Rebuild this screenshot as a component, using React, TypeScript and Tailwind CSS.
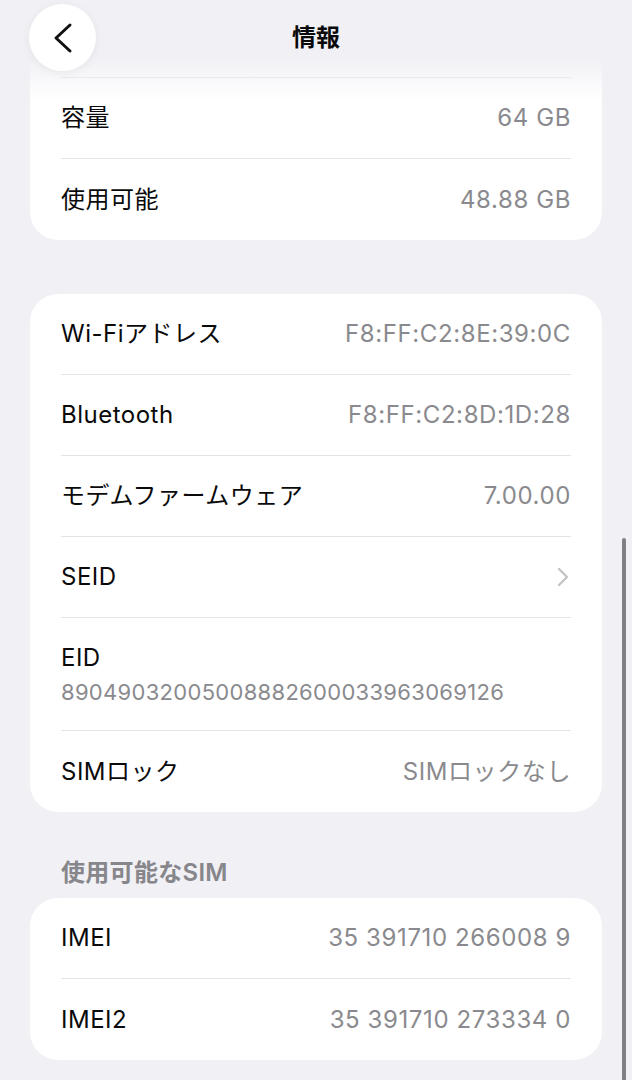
/**
 * AboutScreen
 *
 * iOS settings "情報" page, scrolled down a little:
 * - Floating header with back button, fading over the first card
 * - Storage card, network card, SIM section
 */

const FONT = {
    fontFamily: '"Inter", "Noto Sans CJK JP", sans-serif',
};

interface RowProps {
    label: string;
    value?: string;
    chevron?: boolean;
    last?: boolean;
}

function Row({ label, value, chevron, last }: RowProps) {
    return (
        <div className="px-[31px]">
            <div
                className={
                    "flex h-[81px] items-center justify-between" +
                    (last ? "" : " border-b border-[#e3e3e8]")
                }
            >
                <span className="text-[24px] leading-[30px] text-[#0a0a0a] tracking-[0.5px]">
                    {label}
                </span>
                {value && (
                    <span className="text-[24px] leading-[30px] text-[#8a8a8e] tracking-[0.6px]">
                        {value}
                    </span>
                )}
                {chevron && (
                    <svg
                        width="14"
                        height="22"
                        viewBox="0 0 14 22"
                        className="mr-[1px]"
                    >
                        <path
                            d="M3 3 L11 11 L3 19"
                            fill="none"
                            stroke="#c4c4c8"
                            strokeWidth="2.4"
                            strokeLinecap="round"
                            strokeLinejoin="round"
                        />
                    </svg>
                )}
            </div>
        </div>
    );
}

function Card({ children }: { children: React.ReactNode }) {
    return (
        <div className="mx-[30px] rounded-[28px] bg-white overflow-hidden">
            {children}
        </div>
    );
}

export default function App() {
    return (
        <div
            className="relative h-[1080px] w-[632px] overflow-hidden bg-[#f0f0f5]"
            style={FONT}
        >
            {/* Scrolled content */}
            <div className="flex flex-col -mt-[3px]">
                <Card>
                    <Row label="モデル番号" value="MQ6L3J/A" />
                    <Row label="容量" value="64 GB" />
                    <Row label="使用可能" value="48.88 GB" last />
                </Card>

                <div className="h-[54px]" />

                <Card>
                    <Row label="Wi-Fiアドレス" value="F8:FF:C2:8E:39:0C" />
                    <Row label="Bluetooth" value="F8:FF:C2:8D:1D:28" />
                    <Row label="モデムファームウェア" value="7.00.00" />
                    <Row label="SEID" chevron />
                    <div className="px-[31px]">
                        <div className="flex h-[113px] flex-col justify-center border-b border-[#e3e3e8]">
                            <span className="text-[24px] leading-[30px] text-[#0a0a0a] tracking-[0.5px]">
                                EID
                            </span>
                            <span className="mt-[5px] text-[22px] leading-[28px] text-[#8a8a8e] tracking-[0.3px]">
                                89049032005008882600033963069126
                            </span>
                        </div>
                    </div>
                    <Row label="SIMロック" value="SIMロックなし" last />
                </Card>

                <div className="px-[61px] pt-[46px] pb-[10px]">
                    <span className="block text-[24px] leading-[30px] font-semibold text-[#86868b] tracking-[0.3px]">
                        使用可能なSIM
                    </span>
                </div>

                <Card>
                    <Row label="IMEI" value="35 391710 266008 9" />
                    <Row label="IMEI2" value="35 391710 273334 0" last />
                </Card>
            </div>

            {/* Header fade over content */}
            <div className="pointer-events-none absolute inset-x-0 top-0 h-[100px] bg-gradient-to-b from-[#f0f0f5] from-55% to-[#f0f0f5]/0" />

            {/* Header */}
            <div className="absolute inset-x-0 top-0 flex h-[75px] items-center justify-center">
                <span className="text-[24px] font-semibold text-[#0a0a0a]">
                    情報
                </span>
                <button className="absolute left-[29px] top-[4px] flex h-[67px] w-[67px] items-center justify-center rounded-full bg-white/95 shadow-[0_2px_10px_rgba(0,0,0,0.06)]">
                    <svg width="30" height="34" viewBox="0 0 30 34">
                        <path
                            d="M22 4 L8 17 L22 30"
                            fill="none"
                            stroke="#111"
                            strokeWidth="3"
                            strokeLinecap="round"
                            strokeLinejoin="round"
                        />
                    </svg>
                </button>
            </div>

            {/* Scroll indicator */}
            <div className="absolute right-[6px] top-[538px] h-[560px] w-[4px] rounded-full bg-[#7f7f84]" />
        </div>
    );
}
